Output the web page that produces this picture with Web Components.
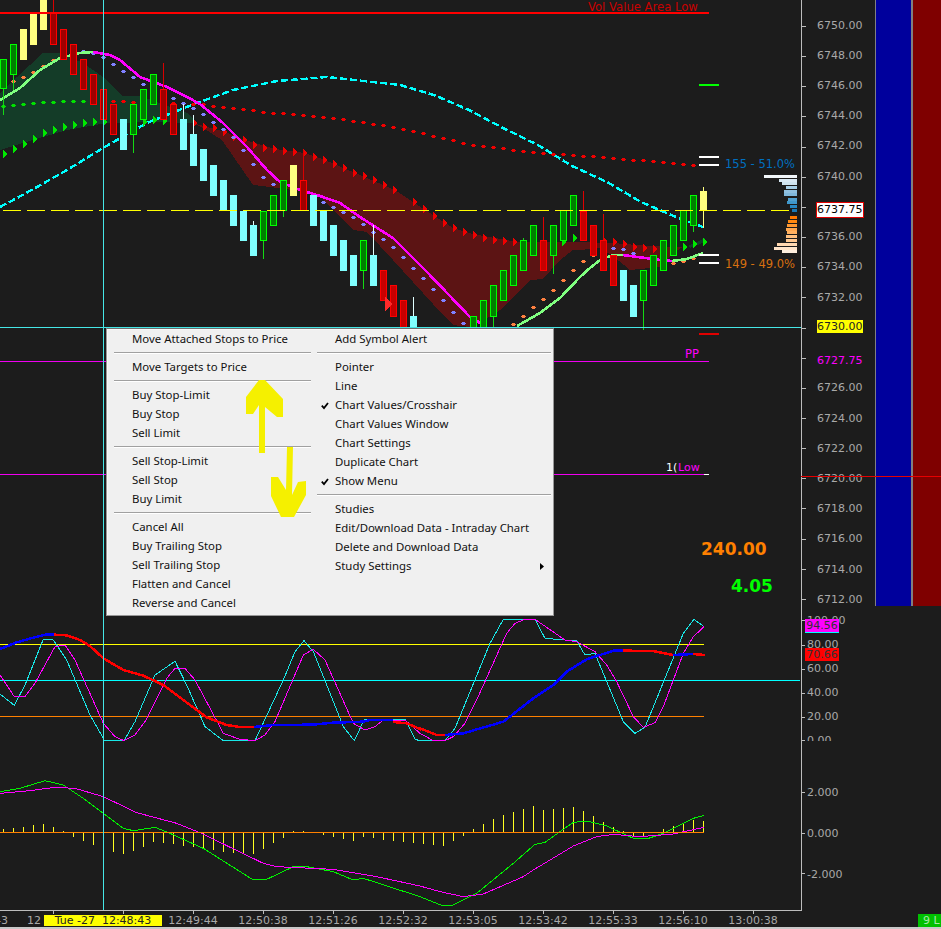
<!DOCTYPE html>
<html>
<head>
<meta charset="utf-8">
<title>Chart</title>
<style>
  html, body { margin: 0; padding: 0; background: #1c1c1c; }
</style>
</head>
<body>
<trading-chart>
  <price-pane></price-pane>
  <rsi-pane></rsi-pane>
  <macd-pane></macd-pane>
  <time-axis></time-axis>
  <context-menu>
    <menu-col slot="left" style="--item-pad:11px;--sep-l:7px;--sep-r:3px">
      <menu-item>Move Attached Stops to Price</menu-item>
      <menu-sep></menu-sep>
      <menu-item>Move Targets to Price</menu-item>
      <menu-sep></menu-sep>
      <menu-item>Buy Stop-Limit</menu-item>
      <menu-item>Buy Stop</menu-item>
      <menu-item>Sell Limit</menu-item>
      <menu-sep></menu-sep>
      <menu-item>Sell Stop-Limit</menu-item>
      <menu-item>Sell Stop</menu-item>
      <menu-item>Buy Limit</menu-item>
      <menu-sep></menu-sep>
      <menu-item>Cancel All</menu-item>
      <menu-item>Buy Trailing Stop</menu-item>
      <menu-item>Sell Trailing Stop</menu-item>
      <menu-item>Flatten and Cancel</menu-item>
      <menu-item>Reverse and Cancel</menu-item>
    </menu-col>
    <menu-col slot="right" style="--item-pad:7px;--sep-l:3px;--sep-r:2px">
      <menu-item>Add Symbol Alert</menu-item>
      <menu-sep></menu-sep>
      <menu-item>Pointer</menu-item>
      <menu-item>Line</menu-item>
      <menu-item checked>Chart Values/Crosshair</menu-item>
      <menu-item>Chart Values Window</menu-item>
      <menu-item>Chart Settings</menu-item>
      <menu-item>Duplicate Chart</menu-item>
      <menu-item checked>Show Menu</menu-item>
      <menu-sep></menu-sep>
      <menu-item>Studies</menu-item>
      <menu-item>Edit/Download Data - Intraday Chart</menu-item>
      <menu-item>Delete and Download Data</menu-item>
      <menu-item submenu>Study Settings</menu-item>
    </menu-col>
  </context-menu>
</trading-chart>

<script>
// svg helpers, all coords are page pixels
const poly = (pts, color, w, dash) =>
  `<polyline points="${pts.map(p => p.join(',')).join(' ')}" fill="none" stroke="${color}" stroke-width="${w}"${dash ? ` stroke-dasharray="${dash}"` : ''}/>`;
const box = (x, y, w, h, color) => `<rect x="${x}" y="${y}" width="${w}" height="${h}" fill="${color}"/>`;
const tri = (x, y, color) => `<path d="M${x - 2} ${y - 4}L${x + 3} ${y}L${x - 2} ${y + 4}Z" fill="${color}"/>`;

function yAt(pts, x) {
  for (let i = 1; i < pts.length; i++) {
    if (x <= pts[i][0]) {
      const a = pts[i - 1], b = pts[i];
      return a[1] + (b[1] - a[1]) * (x - a[0]) / (b[0] - a[0]);
    }
  }
  return pts[pts.length - 1][1];
}
// little plus marks along a curve, one per bar
function dots(pts, color, from, to) {
  let s = '';
  for (let x = from; x <= to; x += 10) {
    const y = Math.round(yAt(pts, x));
    s += box(x - 2, y, 5, 1, color) + box(x - 1, y - 1, 3, 3, color);
  }
  return s;
}

// [left, kind, top, bottom, wickTop, wickBottom], 0 = no wick
const BARS = [
  [0,'g',59,89,0,115],[10,'g',44,75,0,90],[20,'y',29,60],[30,'y',13,45],[40,'y',-2,30],
  [50,'r',13,45,-1,0],[60,'r',29,60],[70,'r',44,75],[80,'r',59,90],[90,'r',74,105],
  [100,'r',89,120],[110,'r',104,135],[120,'c',119,150],[130,'g',104,135,0,153],[140,'g',89,120,0,127],
  [150,'g',74,105],[160,'r',89,120,63,0],[170,'r',104,135],[180,'c',119,150,104,0],[190,'c',134,166,115,0],
  [200,'c',149,181],[210,'c',165,196],[220,'c',180,211],[230,'c',195,226],[240,'c',211,241],
  [250,'c',225,256,221,0],[260,'g',211,241,0,259],[270,'g',195,226],[280,'g',180,211,0,217],[290,'y',165,196],
  [300,'r',180,211,150,0],[310,'c',195,226],[320,'c',211,241],[330,'c',225,256],[340,'c',240,271],
  [350,'c',255,286],[360,'g',240,271,0,289],[370,'c',255,286,225,0],[380,'R',270,301],[390,'R',285,317],
  [400,'R',300,331],[410,'c',316,331,297,0],[470,'g',316,331],[480,'g',300,331],[490,'g',285,317,0,331],
  [500,'g',270,301],[510,'g',255,286],[520,'g',240,271,238,0],[530,'g',225,256],[540,'R',240,271,217,0],
  [550,'g',225,256,0,274],[560,'g',210,241],[570,'g',195,226],[580,'R',211,241,191,0],[590,'R',225,256],
  [600,'R',240,271,214,0],[610,'R',255,286],[620,'c',270,301],[630,'c',285,317],[640,'g',270,301,0,330],
  [650,'g',255,286],[660,'g',240,271],[670,'g',225,256],[680,'g',210,241],[690,'g',195,226,0,232],
  [700,'y',191,210,187,228]
];
const KINDS = {
  g: ['#008000', '#00ff00', '#14d814'],
  r: ['#a00000', '#ff0000', '#d80000'],
  R: ['#c80000', '#ff0000', '#e00000'],
  y: ['#ffff80', null, '#ffff80'],
  c: ['#80ffff', null, '#e0ffff']
};
function bars() {
  return BARS.map(([x, k, t, b, wt, wb]) => {
    const [fill, edge, wick] = KINDS[k];
    let s = '';
    if (wt) s += box(x + 3, Math.max(wt, 0), 1, t - Math.max(wt, 0), wick);
    if (wb) s += box(x + 3, b, 1, wb - b, wick);
    if (edge) s += `<rect x="${x + .5}" y="${t + .5}" width="6" height="${b - t - 1}" fill="${fill}" stroke="${edge}"/>`;
    else s += box(x, t, 7, b - t, fill);
    return s;
  }).join('');
}

const CYAN_DASH = [[0,207],[17,198],[37,187],[67,170],[103,148],[147,123],[197,103],[233,90],[277,81],[327,77],[400,85],[434,95],[469,110],[503,128],[538,145],[572,166],[607,182],[641,202],[676,217],[703,227]];
const MID_DOTS = [[0,106],[33,103],[67,101],[110,101],[200,104],[267,112],[333,118],[400,128],[469,144],[538,153],[607,157],[700,166]];
const ORANGE_L = [[0,86],[20,79],[40,68],[60,55],[80,49]];
const ORANGE_R = [[510,327],[533,307],[553,290],[573,270],[583,261],[590,257],[600,251],[610,248]];
const ORANGE_E = [[670,263],[680,262],[690,259],[700,255]];
const PURPLE = [[73,49],[100,55],[123,71],[150,88],[173,98],[200,112],[233,137],[263,177],[287,193],[320,201],[353,217],[360,222],[393,247],[427,282],[463,323]];
const GREEN_UP = [[0,100],[20,88],[40,70],[60,58],[80,53],[93,52]];
const MAGENTA_DN = [[93,52],[110,55],[120,60],[140,77],[167,87],[187,97],[200,104],[223,123],[247,147],[267,170],[280,182],[300,190],[320,196],[340,203],[360,217],[393,238],[427,272],[470,317],[487,327]];
const GREEN_R = [[517,326],[540,313],[560,298],[580,277],[590,268],[600,260],[613,255],[623,255]];
const MAGENTA_R = [[623,255],[660,260],[672,261]];
const GREEN_E = [[672,261],[687,259],[703,253]];

const CLOUD_G = [[0,93],[17,77],[43,53],[60,53],[83,63],[103,77],[123,96],[140,96],[187,113],[197,123],[157,122],[107,123],[67,130],[33,140],[0,150]];
const CLOUD_R = [[193,123],[225,132],[245,140],[275,149],[305,153],[325,160],[355,173],[395,190],[413,202],[433,215],[453,228],[473,234],[517,242],[580,242],[613,243],[650,246],[683,247],[673,253],[660,267],[630,270],[613,256],[600,248],[580,250],[573,250],[560,260],[543,279],[530,280],[500,310],[493,315],[470,327],[453,325],[443,315],[393,260],[367,232],[353,230],[333,210],[320,196],[293,190],[262,186],[253,185],[222,140],[203,128]];

const GREEN_TRI = [[5,154],[15,149],[25,144],[35,139],[45,133],[55,130],[65,127],[75,125],[85,123],[95,122],[105,122],[145,122],[155,120],[165,121],[564,242],[575,238],[685,247],[695,244],[705,242]];
const RED_TRI = [[195,123],[205,127],[215,128],[225,132],[235,137],[245,140],[255,145],[265,148],[275,149],[285,151],[295,152],[305,153],[315,157],[325,160],[335,164],[345,168],[355,173],[365,176],[375,180],[385,185],[395,190],[415,202],[425,209],[435,216],[445,223],[455,228],[465,232],[475,235],[485,238],[495,240],[505,241],[515,242],[605,241],[615,242],[625,244],[635,247],[645,248],[655,249]];

// horizontal dashes of the last price
function priceDashes() {
  let s = '';
  for (let x = 3; x < 790; x += 24) s += box(x, 210, 18, 1, '#ffff00');
  return s;
}

const PROFILE = [
  [175,764,'#f2f7fb'],[179,779,'#d9e9f4'],[182,782,'#cfe4f0'],[186,786,'#a8d0e8'],[190,784,'#90c0e0'],[193,784,'#80b8dc'],
  [198,788,'#50a0d0'],[201,787,'#3f98cc'],[205,790,'#2888c4'],[209,792,'#1878b8'],
  [216,790,'#ff7800'],[220,788,'#ff8810'],[224,787,'#ff9830'],[228,786,'#ffa850'],[231,787,'#ffb060'],[235,786,'#ffc080'],
  [239,786,'#ffc890'],[243,777,'#ffd8b0'],[247,774,'#ffe4c8'],[250,782,'#fff0e0']
];

const AXIS_LINE = '#bdbdbd';
const CROSS = '#45e6e6';
const SVG_CSS = `svg{display:block;flex:none;shape-rendering:crispEdges}
  text{font-family:"DejaVu Sans",Verdana,sans-serif;font-size:11.5px;shape-rendering:auto}`;

class TradingChart extends HTMLElement {
  constructor() {
    super();
    this.attachShadow({ mode: 'open' });
    this.shadowRoot.innerHTML = `
      <style>
        :host { display: block; position: relative; width: 941px; height: 929px; overflow: hidden; background: #1c1c1c; }
        .panes { display: flex; flex-direction: column; height: 100%; }
      </style>
      <div class="panes"><slot></slot></div>`;
  }
}

// column of labels right of the axis, each placed by the gap from the one above
class AxisScale extends HTMLElement {
  static get observedAttributes() { return ['rows']; }
  constructor() {
    super();
    this.attachShadow({ mode: 'open' });
  }
  connectedCallback() { this.draw(); }
  attributeChangedCallback() { this.draw(); }
  draw() {
    const rows = (this.getAttribute('rows') || '').split(',').filter(Boolean);
    let last = parseFloat(this.getAttribute('start') || '0');
    const html = rows.map(r => {
      const [y, text, cls] = r.split(':');
      const gap = parseFloat(y) - 7 - last;
      last = parseFloat(y) + 7;
      return `<span class="${cls || ''}" style="margin-top:${gap}px">${text}</span>`;
    }).join('');
    this.shadowRoot.innerHTML = `
      <style>
        :host { display: flex; flex-direction: column; align-items: flex-start; flex: none; overflow: hidden;
                box-sizing: border-box; width: var(--scale-w, 69px); padding-left: var(--scale-pad, 11px);
                font: 11px/14px "DejaVu Sans", Verdana, sans-serif; color: #a9a9a9; }
        span { display: block; height: 14px; flex: none; white-space: nowrap; }
        .last { background: #fff; color: #000; box-shadow: 0 0 0 1px #e00000; }
        .high { background: #ffff00; color: #222; height: 13px; line-height: 13px; padding-bottom: 1px; background-clip: content-box; }
        .pp { color: #ff00ff; }
      </style>${html}`;
  }
}

class SignalBars extends HTMLElement {
  constructor() {
    super();
    this.attachShadow({ mode: 'open' });
    this.shadowRoot.innerHTML = `
      <style>
        :host { display: flex; flex: 1; height: 100%; }
        div { height: 100%; }
        .line { width: 1px; background: #808080; }
        .blue { width: 35px; background: #00009c; }
        .sep { width: 2px; background: #808080; }
        .red { flex: 1; background: #7f0000; }
      </style>
      <div class="line"></div><div class="blue"></div><div class="sep"></div><div class="red"></div>`;
  }
}

class PricePane extends HTMLElement {
  constructor() {
    super();
    this.attachShadow({ mode: 'open' });
    let ticks = '';
    for (let k = 0; k < 20; k++) ticks += box(802, Math.round(26 + k * 30.15), 4, 1, AXIS_LINE);
    const marks = [[85,'#00ff00'],[157,'#fff'],[165,'#fff'],[255,'#fff'],[263,'#fff'],[334,'#e00000']]
      .map(([y, c]) => box(699, y - 1, 20, 2, c)).join('');
    const profile = PROFILE.map(([y, x, c]) => box(x, y, 797 - x, 3, c)).join('');
    const rows = [
      '26:6750.00','56:6748.00','86:6746.00','116:6744.00','146:6742.00','177:6740.00','210:6737.75:last',
      '237:6736.00','267:6734.00','298:6732.00','327:6730.00:high','361:6727.75:pp','388:6726.00','419:6724.00',
      '449:6722.00','479:6720.00','509:6718.00','539:6716.00','570:6714.00','600:6712.00'
    ].join(',');
    this.shadowRoot.innerHTML = `
      <style>
        :host { display: flex; position: relative; height: 606px; flex: none; }
        ${SVG_CSS}
        .hair { position: absolute; left: 801px; right: 0; top: 476px; height: 1px; background: #e60000; }
      </style>
      <svg width="806" height="606" viewBox="0 0 806 606">
        <polygon points="${CLOUD_G.join(' ')}" fill="#143c28"/>
        <polygon points="${CLOUD_R.join(' ')}" fill="#5c1414"/>
        <polygon points="688,246 705,238 705,242 690,248" fill="#143c28"/>
        ${poly(CYAN_DASH, '#00ffff', 2.4, '7 3')}
        ${dots(MID_DOTS, '#00e000', 3, 83)}${dots(MID_DOTS, '#f00000', 93, 693)}
        ${GREEN_TRI.map(p => tri(p[0], p[1], '#00e800')).join('')}
        ${RED_TRI.map(p => tri(p[0], p[1], '#f00000')).join('')}
        ${dots(ORANGE_L, '#ff8040', 3, 73)}${dots(ORANGE_R, '#ff8040', 513, 603)}${dots(ORANGE_E, '#ff8040', 673, 693)}
        ${dots(PURPLE, '#8080ff', 73, 463)}${dots([[610,248],[620,248],[630,252],[640,256]], '#8080ff', 613, 633)}
        ${poly(GREEN_UP, '#80ff80', 2.6)}${poly(MAGENTA_DN, '#ff00ff', 2.6)}
        ${poly(GREEN_R, '#80ff80', 2.6)}${poly(MAGENTA_R, '#ff00ff', 2.6)}${poly(GREEN_E, '#80ff80', 2.6)}
        ${bars()}
        <path d="M385 297L393 304L385 311Z" fill="#ff2a2a"/>
        ${priceDashes()}
        ${box(0, 12, 709, 2, '#ff0000')}
        ${box(0, 361, 709, 1, '#f000f0')}
        ${box(0, 474, 704, 1, '#f000f0')}${box(704, 474, 5, 1, '#fff')}
        ${marks}${profile}
        ${box(103, 0, 1, 606, CROSS)}${box(0, 327, 801, 1, CROSS)}
        ${box(801, 0, 1, 606, AXIS_LINE)}${ticks}
        <text x="588" y="11" fill="#c80000" style="font-size:11.6px">Vol Value Area Low</text>
        <text x="725" y="168" fill="#0070c0">155 - 51.0%</text>
        <text x="725" y="268" fill="#d87010">149 - 49.0%</text>
        <text x="685" y="358" fill="#ff00ff">PP</text>
        <text x="666" y="471" fill="#fff" style="font-size:11px">1(</text>
        <text x="678" y="471" fill="#ff00ff" style="font-size:11px">Low</text>
        <text x="701" y="555" fill="#ff8000" style="font-size:17px;font-weight:bold">240.00</text>
        <text x="731" y="592" fill="#00ff00" style="font-size:17px;font-weight:bold">4.05</text>
      </svg>
      <axis-scale rows="${rows}"></axis-scale>
      <signal-bars></signal-bars>
      <div class="hair"></div>`;
  }
}

// traced from a 3x crop, ox = left of the crop
const crop = (ox, pts) => pts.map(([x, y]) => [ox + x / 3, 610 + y / 3]);

class RsiPane extends HTMLElement {
  constructor() {
    super();
    this.attachShadow({ mode: 'open' });
    const blue1 = crop(0, [[0,117],[50,97],[100,83],[140,73],[162,73]]);
    const red1 = crop(0, [[162,74],[200,76],[240,90],[270,108],[310,145],[370,180],[430,197],[490,225],[550,270],[620,322],[680,345],[720,351],[762,351]]);
    const blue2 = crop(0, [[762,351],[820,345],[940,344],[1000,338],[1090,335],[1110,330],[1180,330]]);
    const red2 = crop(0, [[1180,336],[1220,340],[1260,357]]).concat(crop(420, [[0,355],[50,375],[75,375]]));
    const blue3 = crop(420, [[75,375],[130,370],[250,335],[340,265],[400,225],[440,185],[500,148],[580,122],[610,122]]);
    const red3 = crop(420, [[610,122],[700,123],[760,135]]);
    const blue4 = crop(420, [[760,135],[820,132]]);
    const red4 = crop(420, [[820,132],[855,135]]);
    const cyan = crop(0, [[0,252],[43,286],[75,225],[130,88],[160,90],[200,150],[270,315],[310,385],[312,392],[372,392],[405,335],[465,195],[525,154],[560,225],[615,350],[670,392],[765,392],[850,210],[885,125],[912,92],[940,125],[1030,350],[1063,392],[1092,330],[1215,328],[1245,388],[1260,392]])
      .concat(crop(420, [[75,392],[105,355],[210,100],[250,28],[345,28],[375,85],[470,93],[495,135],[525,130],[610,335],[645,370],[675,352],[790,70],[822,28],[852,50]]));
    const mag = crop(0, [[0,195],[43,260],[75,260],[105,220],[165,110],[195,105],[225,150],[310,340],[345,380],[372,392],[405,375],[435,335],[500,205],[525,175],[555,175],[585,210],[670,370],[720,388],[765,392],[795,375],[825,335],[910,135],[940,118],[975,150],[1060,340],[1095,360],[1125,350],[1150,330],[1215,330],[1260,370]])
      .concat(crop(420, [[40,392],[75,392],[100,380],[135,340],[170,270],[260,70],[285,40],[315,28],[345,28],[435,90],[470,95],[525,125],[560,165],[590,215],[640,320],[670,352],[705,338],[730,290],[790,130],[820,80],[852,50]]));
    let ticks = '';
    [620,645,669,693,717,740].forEach(y => { ticks += box(802, y, 3, 1, AXIS_LINE); });
    this.shadowRoot.innerHTML = `
      <style>
        :host { display: flex; position: relative; height: 135px; flex: none; overflow: hidden; }
        ${SVG_CSS}
        axis-scale { --scale-w: 135px; --scale-pad: 1px; }
        .flag { position: absolute; left: 805px; width: 34px; height: 13px; text-align: center;
                font: 11px/13px "DejaVu Sans", Verdana, sans-serif; color: #333; }
        .k { top: 13px; background: #ff00ff; border-bottom: 1px solid #00ffff; }
        .d { top: 42px; background: #ff0000; }
      </style>
      <svg width="806" height="135" viewBox="0 606 806 135">
        ${box(0, 644, 704, 1, '#ffff00')}${box(0, 680, 800, 1, '#00ffff')}${box(0, 716, 704, 1, '#ff8000')}
        ${poly(cyan, '#19e6e6', 1)}${poly(mag, '#ff00ff', 1)}
        ${poly(blue1, '#0000ff', 2.5)}${poly(red1, '#ff0000', 2.5)}${poly(blue2, '#0000ff', 2.5)}${poly(red2, '#ff0000', 2.5)}
        ${poly(blue3, '#0000ff', 2.5)}${poly(red3, '#ff0000', 2.5)}${poly(blue4, '#0000ff', 2.5)}${poly(red4, '#ff0000', 2.5)}
        ${box(103, 606, 1, 135, CROSS)}
        ${box(801, 606, 1, 135, AXIS_LINE)}${ticks}
      </svg>
      <axis-scale start="606" rows="621:100.00,645:80.00,669:60.00,693:40.00,717:20.00,741:0.00"></axis-scale>
      <div class="flag k">94.56</div>
      <div class="flag d">70.66</div>`;
  }
}

class MacdPane extends HTMLElement {
  constructor() {
    super();
    this.attachShadow({ mode: 'open' });
    const green = crop(0, [[0,545],[60,535],[135,512],[190,525],[250,565],[310,610],[370,655],[400,662],[465,652],[510,670],[610,715],[760,810],[800,808],[880,770],[920,770],[1000,785],[1060,810],[1090,805],[1260,860]])
      .concat(crop(420, [[70,888],[100,885],[170,850],[280,760],[345,703],[375,697],[420,665],[460,637],[500,633],[560,648],[640,685],[680,687],[730,670],[820,625],[852,616]]));
    const mag = crop(0, [[0,550],[90,542],[165,532],[225,535],[310,560],[410,608],[530,640],[600,668],[790,760],[830,770],[1000,778],[1130,800],[1260,828]])
      .concat(crop(420, [[60,845],[130,860],[190,852],[310,800],[340,780],[460,708],[530,680],[580,673],[660,680],[760,672],[852,652]]));
    // histogram tips, 30 crop px apart
    const left = [657,653,650,645,642,651,663,680,692,705,717,725,731,722,710,696,698,702,708,712,718,720,725,728,729,732,718,698,684,663,663,null,675,680,687,693,681,685,690,693,696,698];
    const right = [702,705,707,692,678,657,642,627,615,606,597,588,600,597,594,591,603,618,636,652,662,680,680,null,657,648,640,630,633];
    let hist = '';
    left.forEach((y, i) => { if (y) hist += stem(3 + i * 10, 610 + y / 3); });
    right.forEach((y, i) => { if (y) hist += stem(423 + i * 10, 610 + y / 3); });
    function stem(x, y) {
      y = Math.round(y);
      return y < 832 ? box(x, y, 1, 832 - y, '#ffff20') : box(x, 832, 1, y - 832, '#ffff20');
    }
    let ticks = '';
    [792,833,873].forEach(y => { ticks += box(802, y, 3, 1, AXIS_LINE); });
    for (let x = 53; x < 790; x += 70) ticks += box(x, 910, 1, 4, AXIS_LINE);
    this.shadowRoot.innerHTML = `
      <style>
        :host { display: flex; height: 173px; flex: none; }
        ${SVG_CSS}
        axis-scale { --scale-w: 135px; --scale-pad: 1px; }
      </style>
      <svg width="806" height="173" viewBox="0 741 806 173">
        ${hist}
        ${poly(green, '#00f000', 1)}${poly(mag, '#ff00ff', 1)}
        ${box(0, 832, 704, 1, '#ff8000')}
        ${box(103, 741, 1, 169, CROSS)}
        ${box(801, 741, 1, 170, AXIS_LINE)}${box(0, 910, 802, 1, AXIS_LINE)}${ticks}
      </svg>
      <axis-scale start="741" rows="793:2.000,834:0.000,875:-2.000"></axis-scale>`;
  }
}

class TimeAxis extends HTMLElement {
  constructor() {
    super();
    this.attachShadow({ mode: 'open' });
    const times = ['12:49:44','12:50:38','12:51:26','12:52:32','12:53:05','12:53:42','12:55:33','12:56:10','13:00:38'];
    this.shadowRoot.innerHTML = `
      <style>
        :host { display: flex; align-items: center; height: 15px; flex: none; box-sizing: border-box;
                border-bottom: 2px solid #c8c8c8; font: 11px/13px "DejaVu Sans", Verdana, sans-serif; color: #a9a9a9; }
        span { display: block; flex: none; white-space: pre; }
        .a { width: 8px; display: flex; justify-content: flex-end; }
        .b { width: 33px; padding-right: 3px; text-align: right; }
        .now { width: 118px; height: 11px; line-height: 11px; background: #ffff00; color: #222; text-align: center; margin-right: -4px; }
        .t { width: 70px; text-align: center; }
        .live { margin-left: auto; width: 23px; height: 13px; box-sizing: border-box; padding-left: 5px; overflow: hidden;
                background: #00c000; color: #a8e8a8; }
      </style>
      <span class="a">43</span><span class="b">12</span><span class="now">Tue -27  12:48:43</span>
      ${times.map(t => `<span class="t">${t}</span>`).join('')}
      <span class="live">9 L</span>`;
  }
}

class ContextMenu extends HTMLElement {
  constructor() {
    super();
    this.attachShadow({ mode: 'open' });
    this.shadowRoot.innerHTML = `
      <style>
        :host { position: absolute; left: 106px; top: 328px; width: 448px; height: 288px; box-sizing: border-box;
                display: flex; background: #f0f0f0; border: 1px solid #979797; border-top-color: #6e6e6e;
                box-shadow: inset 1px 1px 0 #f8f8f8; }
        ::slotted([slot=left]) { width: 207px; }
        ::slotted([slot=right]) { flex: 1; }
        svg { position: absolute; left: 0; top: 0; overflow: visible; pointer-events: none; }
      </style>
      <slot name="left"></slot>
      <slot name="right"></slot>
      <svg width="446" height="286" viewBox="107 329 446 286">
        <polygon fill="#f5f000" points="259,380 265,380 283,399 283,417 277,417 265,407 265,453 259,453 259,405 253,414 246,414 246,397"/>
        <polygon fill="#f5f000" points="287,447 293,447 292,495 298,482 306,481 306,495 294,517 281,517 271,496 271,477 278,477 286,490"/>
      </svg>`;
  }
}

class MenuCol extends HTMLElement {
  constructor() {
    super();
    this.attachShadow({ mode: 'open' });
    this.shadowRoot.innerHTML = `
      <style>
        :host { display: flex; flex-direction: column; padding: 1px 0 0; box-sizing: border-box; }
      </style>
      <slot></slot>`;
  }
}

class MenuItem extends HTMLElement {
  constructor() {
    super();
    this.attachShadow({ mode: 'open' });
    const mark = this.hasAttribute('checked')
      ? '<svg width="8" height="8" viewBox="0 0 8 8"><path d="M.8 3.6L3 6L7 1" fill="none" stroke="#000" stroke-width="1.8"/></svg>' : '';
    const more = this.hasAttribute('submenu')
      ? '<svg class="more" width="5" height="7" viewBox="0 0 5 7"><path d="M0 0L4 3.5L0 7Z" fill="#000"/></svg>' : '';
    this.shadowRoot.innerHTML = `
      <style>
        :host { display: flex; align-items: center; height: 19px; flex: none; box-sizing: border-box; padding: 0 0 2px var(--item-pad);
                font: 11.4px/17px "Noto Sans", Tahoma, sans-serif; color: #111; white-space: nowrap; }
        .mark { width: 14px; flex: none; display: flex; align-items: center; padding-top: 2px; }
        .more { margin-left: auto; margin-right: 8px; margin-top: 2px; }
      </style>
      <span class="mark">${mark}</span><slot></slot>${more}`;
  }
}

class MenuSep extends HTMLElement {
  constructor() {
    super();
    this.attachShadow({ mode: 'open' });
    this.shadowRoot.innerHTML = `
      <style>
        :host { display: block; height: 9px; flex: none; box-sizing: border-box; padding: 3px var(--sep-r) 0 var(--sep-l); }
        div { height: 1px; background: #a0a0a0; border-bottom: 1px solid #fff; }
      </style>
      <div></div>`;
  }
}

customElements.define('axis-scale', AxisScale);
customElements.define('signal-bars', SignalBars);
customElements.define('price-pane', PricePane);
customElements.define('rsi-pane', RsiPane);
customElements.define('macd-pane', MacdPane);
customElements.define('time-axis', TimeAxis);
customElements.define('menu-col', MenuCol);
customElements.define('menu-item', MenuItem);
customElements.define('menu-sep', MenuSep);
customElements.define('context-menu', ContextMenu);
customElements.define('trading-chart', TradingChart);
</script>
</body>
</html>
